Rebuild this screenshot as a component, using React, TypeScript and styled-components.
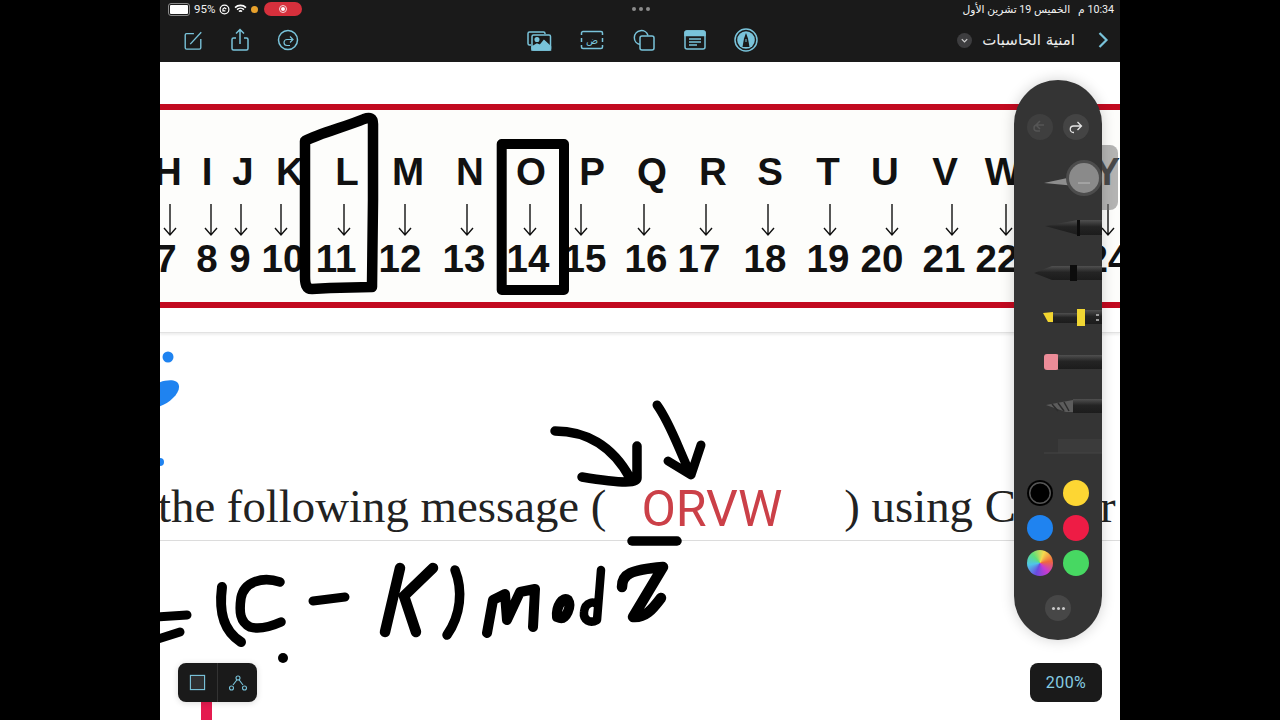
import * as React from 'react'
import styled, { createGlobalStyle } from 'styled-components'

const TEAL = '#79c3da'

const GlobalStyle = createGlobalStyle`
  html, body {
    margin: 0;
    padding: 0;
    background: #000;
    font-family: "Roboto", "DejaVu Sans", sans-serif;
  }
`

// centre x of each mark on the scanned chart, measured from the sheet's left edge
const letters: [string, number][] = [['H', 8], ['I', 47], ['J', 83], ['K', 130], ['L', 187], ['M', 248], ['N', 310], ['O', 371], ['P', 432], ['Q', 492], ['R', 553], ['S', 610], ['T', 668], ['U', 725], ['V', 785], ['W', 843], ['Y', 947]]
const arrows: number[] = [10, 51, 81, 121, 184, 245, 307, 370, 421, 484, 546, 608, 670, 732, 792, 846, 948]
const numbers: [string, number][] = [['7', 6], ['8', 47], ['9', 80], ['10', 123], ['11', 176], ['12', 240], ['13', 304], ['14', 368], ['15', 425], ['16', 486], ['17', 539], ['18', 605], ['19', 668], ['20', 722], ['21', 784], ['22', 837], ['24', 948]]

const swatches = [
  '#000',
  '#fdd633',
  '#1f83f0',
  '#ee1c45',
  'conic-gradient(from 20deg, #f5d94e, #f0683c, #c93ad0, #6a4be0, #4fc6e8, #5fe07a, #f5d94e)',
  '#47d862',
]

const Compose = () => (
  <ToolIcon viewBox="0 0 24 24" width="22" height="22">
    <path d="M13 5H5a1.5 1.5 0 0 0-1.5 1.5v14A1.5 1.5 0 0 0 5 22h14a1.5 1.5 0 0 0 1.5-1.5V11" />
    <path d="M9 16.5 21 3.5" />
  </ToolIcon>
)

const Share = () => (
  <ToolIcon viewBox="0 0 24 24" width="24" height="24">
    <path d="M8 10H5.5A1.5 1.5 0 0 0 4 11.5v9A1.5 1.5 0 0 0 5.500 22h13a1.5 1.5 0 0 0 1.500-1.500v-9A1.500 1.500 0 0 0 18.500 10H16" />
    <path d="M12 16V2M8 5.500 12 1.500l4 4" />
  </ToolIcon>
)

const RedoCircle = () => (
  <ToolIcon viewBox="0 0 24 24" width="24" height="24">
    <circle cx="12" cy="12" r="9.500" />
    <path d="M16.500 11.500H11a3 3 0 0 0 0 6h3M14 8.500l3 3-3 3" strokeWidth="1.200" />
  </ToolIcon>
)

const Media = () => (
  <ToolIcon viewBox="0 0 26 24" width="26" height="24">
    <path d="M5 17H3.500A1.500 1.500 0 0 1 2 15.500v-10A1.500 1.500 0 0 1 3.500 4h14A1.500 1.500 0 0 1 19 5.500V6" />
    <rect x="6" y="7" width="18.500" height="15" rx="1.500" />
    <circle cx="11" cy="11.500" r="1.800" fill={TEAL} />
    <path d="M6 22v-3l5-3 3 1.500 4-5 6.500 6V22z" fill={TEAL} />
  </ToolIcon>
)

const TextBox = () => (
  <ToolIcon viewBox="0 0 24 20" width="24" height="20">
    <path d="M1.500 5V3A1.500 1.500 0 0 1 3 1.500h18A1.500 1.500 0 0 1 22.500 3v2M1.500 8v4M22.500 8v4M1.500 15v2A1.500 1.500 0 0 0 3 18.500h18a1.500 1.500 0 0 0 1.500-1.500v-2" />
    <IconGlyph x="12" y="13.500" textAnchor="middle">ض</IconGlyph>
  </ToolIcon>
)

const Shapes = () => (
  <ToolIcon viewBox="0 0 24 24" width="24" height="24">
    <path d="M8 16.500a7 7 0 1 1 8-9" />
    <rect x="8" y="8" width="14" height="14" rx="2" />
  </ToolIcon>
)

const Comment = () => (
  <ToolIcon viewBox="0 0 22 20" width="22" height="20">
    <rect x="1" y="1" width="20" height="18" rx="2" />
    <path d="M1 3a2 2 0 0 1 2-2h16a2 2 0 0 1 2 2v2.500H1z" fill={TEAL} />
    <path d="M5 9h12M5 12h12M5 15h8" />
  </ToolIcon>
)

const PenCircle = () => (
  <ToolIcon viewBox="0 0 24 24" width="24" height="24">
    <circle cx="12" cy="12" r="11" />
    <circle cx="12" cy="12" r="8.800" fill={TEAL} stroke="none" />
    <path d="M8.500 19 10 10.500 12 5l2 5.500 1.500 8.500z" fill="#1a1a1a" stroke="none" />
    <path d="M11.500 11h1v3h-1z" fill={TEAL} stroke="none" />
  </ToolIcon>
)

const StrokesOverPage = () => (
  <InkLayer viewBox="160 62 960 658" width="960" height="658">
    <Ink $w={10.5} d="M305 141C320 133 345 127 364 119C370 117 373 118 373 124L373 200L372 287L330 288L312 289C306 289 305 284 305 276L305 141Z" />
    <Ink $w={10} d="M501.700 144H564V290H501.700Z" />
    <Ink $w={9.5} d="M555 431C585 431 612 445 630 478M637 446L637 478C637 483 625 484 582 477" />
    <Ink $w={9} d="M657 405C670 423 677 445 690 473M668 461L691 475L701 445" />
    <Ink $w={9.5} d="M632 541L677 541" />
    <Ink $w={9} d="M158 617L187 615M158 639L180 632" />
    <Ink $w={10} d="M222 587C219 610 222 630 241 642" />
    <Ink $w={9.5} d="M280 582C262 576 244 582 241 598C239 612 240 622 250 627C260 630 272 626 281 622" />
    <Ink $w={9} d="M313 601L345 597" />
    <Ink $w={10.5} d="M400 568L385 632M433 568L404 596L416 632" />
    <Ink $w={9.5} d="M455 570C463 590 461 615 447 635" />
    <Ink $w={10} d="M487 633L493 600L505 594L507 620L520 592L535 589L533 627" />
    <Ink $w={10} d="M557 617C556 606 563 596 568 600C572 606 566 620 560 618Z" />
    <Ink $w={8.5} d="M601 570L597 620C590 624 583 620 584 612C585 602 595 600 598 606" />
    <Ink $w={10.500} d="M622 587C622 574 630 570 663 567L633 617C645 618 652 610 661 598" />
    <Dot cx="283" cy="658" r="5" />
    <Dot cx="168" cy="357" r="5.500" $blue />
    <Dot cx="160" cy="462" r="4" $blue />
    <BlueBlob d="M158 383C165 380 178 378 179 386C180 394 168 404 158 407Z" />
  </InkLayer>
)

const PenTray = () => (
  <PenDrawing viewBox="1014 160 88 300" width="88" height="300">
    <defs>
      <linearGradient id="barrel" x1="0" y1="0" x2="0" y2="1">
        <stop offset="0" stopColor="#505050" />
        <stop offset="0.45" stopColor="#242424" />
        <stop offset="1" stopColor="#1c1c1c" />
      </linearGradient>
    </defs>
    <path d="M1044 183 1072 177 1076 186Z" fill="#8d8d8d" />
    <circle cx="1084" cy="178" r="18" fill="#4c4c4c" />
    <circle cx="1084" cy="178" r="15" fill="#8a8a8a" />
    <path d="M1078 183h12" stroke="#bbb" strokeWidth="1" />

    <path d="M1045 226 1078 220H1102V235H1078Z" fill="url(#barrel)" />
    <path d="M1077 220h3v16h-3z" fill="#0c0c0c" />

    <path d="M1034 273 1052 266H1102V280H1052Z" fill="url(#barrel)" />
    <path d="M1070 265h7v16h-7z" fill="#0c0c0c" />

    <path d="M1043 313 1053 312 1053 322 1048 322Z" fill="#f2d530" />
    <path d="M1053 313H1077V323H1053Z" fill="url(#barrel)" />
    <path d="M1085 310H1102V324H1085Z" fill="url(#barrel)" />
    <path d="M1077 309h8v17h-8z" fill="#f0d633" />
    <path d="M1096 314h3v2h-3zM1096 319h3v2h-3z" fill="#999" />

    <rect x="1044" y="354" width="15" height="16" rx="3" fill="#ec8c98" />
    <path d="M1058 355h44v14h-44z" fill="url(#barrel)" />

    <path d="M1046 405 1073 400V412H1066Z" fill="#5c5c5c" />
    <path d="M1052 404 1058 411M1058 403 1064 411M1064 402 1069 411" stroke="#2c2c2c" strokeWidth="1.500" />
    <path d="M1073 399h29v14h-29z" fill="url(#barrel)" />

    <path d="M1058 439h44v14h-44z" fill="#3b3b3b" />
    <path d="M1044 453h58" stroke="#444" />
  </PenDrawing>
)

export default function App() {
  return (
    <Screen>
      <GlobalStyle />
      <Tablet>
        <StatusBar>
          <StatusLeft>
            <Battery><BatteryFill /></Battery>
            <span>95%</span>
            <svg viewBox="0 0 12 12" width="11" height="11" fill="none" stroke="#fff" strokeWidth="1.300">
              <circle cx="6" cy="6" r="4.800" />
              <path d="M8 5.500 6 4 4.300 5.500v2H7" />
            </svg>
            <svg viewBox="0 0 14 11" width="13" height="10" fill="none" stroke="#fff" strokeWidth="1.700">
              <path d="M1 4a8.500 8.500 0 0 1 12 0M3.200 6.200a5.500 5.500 0 0 1 7.600 0M5.300 8.300a2.500 2.500 0 0 1 3.400 0" />
            </svg>
            <OrangeDot />
            <RecordPill><RecordRing /></RecordPill>
          </StatusLeft>
          <GrabDots><i /><i /><i /></GrabDots>
          <Clock dir="rtl">10:34 م&nbsp;&nbsp;&nbsp;الخميس 19 تشرين الأول</Clock>
        </StatusBar>
        <Toolbar>
          <ToolGroup $gap={24}><Compose /><Share /><RedoCircle /></ToolGroup>
          <ToolGroup $gap={28} $center><Media /><TextBox /><Shapes /><Comment /><PenCircle /></ToolGroup>
          <DocTitle>
            <ChevronBadge>
              <svg viewBox="0 0 10 10" width="9" height="9" fill="none" stroke="#cfcfcf" strokeWidth="1.400">
                <path d="M2 3.500 5 6.500 8 3.500" />
              </svg>
            </ChevronBadge>
            <TitleText>امنية الحاسبات</TitleText>
            <svg viewBox="0 0 12 18" width="12" height="18" fill="none" stroke={TEAL} strokeWidth="2.200">
              <path d="M2.500 2 9.500 9 2.500 16" />
            </svg>
          </DocTitle>
        </Toolbar>
        <Sheet>
          <ChartBlock>
            <RedRule />
            <Chart>
              <ChartRow $h={48} $size={38.5}>
                {letters.map(([t, x], i) => (
                  <Mark key={t} $dx={i ? x - letters[i - 1][1] : x}>{t}</Mark>
                ))}
              </ChartRow>
              <ChartRow $h={48} $size={36} $thin>
                {arrows.map((x, i) => (
                  <Mark key={x} $dx={i ? x - arrows[i - 1] : x}>
                    <DownArrow viewBox="0 0 16 34" width="16" height="34">
                      <path d="M8 1V32M2 25 8 32 14 25" />
                    </DownArrow>
                  </Mark>
                ))}
              </ChartRow>
              <ChartRow $h={30} $size={38.5}>
                {numbers.map(([t, x], i) => (
                  <Mark key={t} $dx={i ? x - numbers[i - 1][1] : x}>{t}</Mark>
                ))}
              </ChartRow>
            </Chart>
            <RedRule />
          </ChartBlock>
          <MessageLine>
            <Serif>the following message (</Serif>
            <Answer>ORVW</Answer>
            <Serif $left={62}>) using C</Serif>
            <Serif $left={84}>r</Serif>
          </MessageLine>
          <BelowLine />
          <RedStub />
          <StrokesOverPage />

          <ScrollHint />
          <GreyChip />
          <Palette>
            <HistoryRow>
              <RoundButton $dim>
                <svg viewBox="0 0 16 16" width="16" height="16" fill="none" stroke="#555" strokeWidth="1.500">
                  <path d="M13 7H6a3 3 0 0 0 0 6h3M9 3 5 7l4 4" transform="translate(-1 -1)" />
                </svg>
              </RoundButton>
              <RoundButton>
                <svg viewBox="0 0 16 16" width="16" height="16" fill="none" stroke="#e4e4e4" strokeWidth="1.300">
                  <path d="M6 13.500H5.500a3 3 0 0 1 0-6.500H13M9.500 3 13.500 7l-4 4" />
                </svg>
              </RoundButton>
            </HistoryRow>
            <PenTray />
            <Swatches>
              {swatches.map((s, i) => (
                <Swatch key={s} $fill={s} $ring={i === 0} />
              ))}
            </Swatches>
            <MoreButton><i /><i /><i /></MoreButton>
          </Palette>

          <SelectionTools>
            <SelectCell>
              <svg viewBox="0 0 18 18" width="17" height="17" fill="none" stroke={TEAL} strokeWidth="1.200">
                <rect x="1.500" y="1.500" width="15" height="15" fill="#2e3032" />
              </svg>
            </SelectCell>
            <SelectCell>
              <svg viewBox="0 0 20 18" width="20" height="18" fill="none" stroke={TEAL} strokeWidth="1.100">
                <circle cx="10" cy="4" r="2" />
                <circle cx="3.500" cy="14" r="2" />
                <circle cx="16.500" cy="14" r="2" />
                <path d="M8.800 6 5 11M11.200 6 15 11" />
              </svg>
            </SelectCell>
          </SelectionTools>
          <ZoomBadge>200%</ZoomBadge>
        </Sheet>
      </Tablet>
    </Screen>
  )
}

const Screen = styled.div`
  width: 1280px;
  height: 720px;
  display: flex;
  justify-content: center;
  background: #000;
  overflow: hidden;
`

const Tablet = styled.div`
  width: 960px;
  height: 720px;
  display: flex;
  flex-direction: column;
`

const StatusBar = styled.div`
  height: 22px;
  display: grid;
  grid-template-columns: 1fr auto 1fr;
  align-items: center;
  padding: 0 6px 4px 8px;
  box-sizing: border-box;
  background: #1a1a1a;
  color: #f2f2f2;
  font-size: 11.500px;
`

const StatusLeft = styled.div`
  display: flex;
  align-items: center;
  gap: 4px;
`

const Battery = styled.div`
  width: 18px;
  height: 9px;
  padding: 1px;
  border: 1px solid #8a8a8a;
  border-radius: 3px;
`

const BatteryFill = styled.div`
  height: 100%;
  background: #fff;
  border-radius: 1px;
`

const OrangeDot = styled.div`
  width: 7px;
  height: 7px;
  border-radius: 50%;
  background: #e8a12c;
`

const RecordPill = styled.div`
  width: 38px;
  height: 14px;
  margin-left: 2px;
  display: flex;
  align-items: center;
  justify-content: center;
  border-radius: 7px;
  background: #d6303c;
`

const RecordRing = styled.div`
  width: 4px;
  height: 4px;
  border-radius: 50%;
  background: #fff;
  border: 2px solid #d6303c;
  outline: 1.500px solid #f5d5d8;
  outline-offset: -1px;
`

const GrabDots = styled.div`
  display: flex;
  gap: 3px;

  i {
    width: 4px;
    height: 4px;
    border-radius: 50%;
    background: #8b8b8b;
  }
`

const Clock = styled.div`
  justify-self: end;
  font-family: "Roboto", "DejaVu Sans", sans-serif;
  font-size: 10.700px;
  white-space: nowrap;
`

const Toolbar = styled.div`
  height: 40px;
  display: grid;
  grid-template-columns: 1fr auto 1fr;
  align-items: center;
  padding: 0 11px 4px 22px;
  box-sizing: border-box;
  background: #1a1a1a;
`

const ToolGroup = styled.div<{ $gap: number; $center?: boolean }>`
  display: flex;
  align-items: center;
  gap: ${p => p.$gap}px;
  ${p => (p.$center ? 'margin-left: -7px;' : '')}
`

const ToolIcon = styled.svg`
  fill: none;
  stroke: ${TEAL};
  stroke-width: 1.500;
  flex: none;
`

const IconGlyph = styled.text`
  font-family: "DejaVu Sans", sans-serif;
  font-size: 10px;
  fill: ${TEAL};
  stroke: none;
`

const DocTitle = styled.div`
  justify-self: end;
  display: flex;
  align-items: center;
`

const ChevronBadge = styled.div`
  width: 15px;
  height: 15px;
  display: flex;
  align-items: center;
  justify-content: center;
  border-radius: 50%;
  background: #3d3d3f;
  margin-right: 7px;
`

const TitleText = styled.div`
  color: #ececec;
  font-family: "DejaVu Sans", sans-serif;
  font-size: 15px;
  width: 96px;
  margin-right: 22px;
  white-space: nowrap;
  direction: rtl;
`

const Sheet = styled.div`
  position: relative;
  flex: 1;
  display: flex;
  flex-direction: column;
  background: #fff;
  overflow: hidden;
`

const ChartBlock = styled.div`
  padding: 42px 0 24px;
  border-bottom: 1px solid #e2e2e2;
  box-shadow: 0 2px 2px #efefef;
`

const RedRule = styled.div`
  height: 6px;
  background: #c20a20;
`

const Chart = styled.div`
  height: 192px;
  padding-top: 38px;
  box-sizing: border-box;
  background: #fdfdfb;
  overflow: hidden;
`

const ChartRow = styled.div<{ $h: number; $size: number; $thin?: boolean }>`
  height: ${p => p.$h}px;
  display: flex;
  align-items: center;
  color: #111;
  font-family: "Liberation Sans", Arial, sans-serif;
  font-size: ${p => p.$size}px;
  font-weight: ${p => (p.$thin ? 400 : 700)};
`

// zero-width slot so each glyph can sit centred on its measured x
const Mark = styled.div<{ $dx: number }>`
  flex: none;
  width: 0;
  margin-left: ${p => p.$dx}px;
  display: flex;
  justify-content: center;
  white-space: nowrap;
`

const DownArrow = styled.svg`
  flex: none;
  fill: none;
  stroke: #111;
  stroke-width: 1.400;
`

const MessageLine = styled.div`
  height: 208px;
  display: flex;
  align-items: flex-end;
  padding-bottom: 4px;
  box-sizing: border-box;
  margin-left: -2px;
  white-space: nowrap;
  border-bottom: 1px solid #dcdcdc;
`

const Serif = styled.div<{ $left?: number }>`
  margin-left: ${p => p.$left ?? 0}px;
  margin-bottom: 3px;
  color: #222;
  font-family: "Liberation Serif", "Times New Roman", serif;
  font-size: 46.800px;
  line-height: 54px;
`

const Answer = styled.div`
  margin-left: 35px;
  color: #cb4048;
  font-family: "Roboto", "Liberation Sans", sans-serif;
  font-size: 50px;
  line-height: 54px;
`

const BelowLine = styled.div`
  flex: 1;
`

const RedStub = styled.div`
  width: 11px;
  height: 18px;
  margin-left: 41px;
  background: #e41b4f;
`

const InkLayer = styled.svg`
  position: absolute;
  left: 0;
  top: 0;
  pointer-events: none;
`

const Ink = styled.path<{ $w: number }>`
  fill: none;
  stroke: #000;
  stroke-width: ${p => p.$w};
  stroke-linecap: round;
  stroke-linejoin: round;
`

const Dot = styled.circle<{ $blue?: boolean }>`
  fill: ${p => (p.$blue ? '#1f83f0' : '#000')};
`

const BlueBlob = styled.path`
  fill: #1f83f0;
`

const GreyChip = styled.div`
  position: absolute;
  left: 940px;
  top: 83px;
  width: 18px;
  height: 65px;
  border-radius: 0 8px 8px 0;
  background: rgba(120, 120, 120, 0.55);
`

const ScrollHint = styled.div`
  position: absolute;
  left: 858px;
  top: 283px;
  width: 4px;
  height: 28px;
  border-radius: 2px;
  background: #d9d9d9;
`

const Palette = styled.div`
  position: absolute;
  left: 854px;
  top: 18px;
  width: 88px;
  height: 560px;
  box-sizing: border-box;
  padding-top: 34px;
  display: flex;
  flex-direction: column;
  align-items: center;
  border-radius: 44px;
  background: #343434;
  box-shadow: 0 0 14px rgba(0, 0, 0, 0.18);
  overflow: hidden;
`

const HistoryRow = styled.div`
  display: flex;
  gap: 10px;
`

const RoundButton = styled.div<{ $dim?: boolean }>`
  width: 26px;
  height: 26px;
  display: flex;
  align-items: center;
  justify-content: center;
  border-radius: 50%;
  background: ${p => (p.$dim ? '#3f3f3f' : '#444')};
`

const PenDrawing = styled.svg`
  display: block;
  flex: none;
  margin-top: 20px;
`

const Swatches = styled.div`
  display: grid;
  grid-template-columns: 26px 26px;
  gap: 9px 10px;
  margin-top: 20px;
`

const Swatch = styled.div<{ $fill: string; $ring?: boolean }>`
  width: 26px;
  height: 26px;
  box-sizing: border-box;
  border-radius: 50%;
  background: ${p => p.$fill};
  ${p => (p.$ring ? 'box-shadow: inset 0 0 0 2px #000, inset 0 0 0 3.500px #555;' : '')}
`

const MoreButton = styled.div`
  width: 26px;
  height: 26px;
  margin-top: 19px;
  display: flex;
  align-items: center;
  justify-content: center;
  gap: 2px;
  border-radius: 50%;
  background: #474747;

  i {
    width: 3px;
    height: 3px;
    border-radius: 50%;
    background: #c8c8c8;
  }
`

const SelectionTools = styled.div`
  position: absolute;
  left: 18px;
  top: 601px;
  height: 39px;
  display: flex;
  border-radius: 8px;
  background: #1a1a1a;
  box-shadow: 0 1px 6px rgba(0, 0, 0, 0.15);
`

const SelectCell = styled.div`
  width: 39px;
  display: flex;
  align-items: center;
  justify-content: center;
  & + & {
    border-left: 1px solid #333;
  }
`

const ZoomBadge = styled.div`
  position: absolute;
  left: 870px;
  top: 601px;
  width: 72px;
  height: 39px;
  display: flex;
  align-items: center;
  justify-content: center;
  border-radius: 8px;
  background: #1a1a1a;
  color: #86cde3;
  font-size: 16px;
  letter-spacing: 0.5px;
`
